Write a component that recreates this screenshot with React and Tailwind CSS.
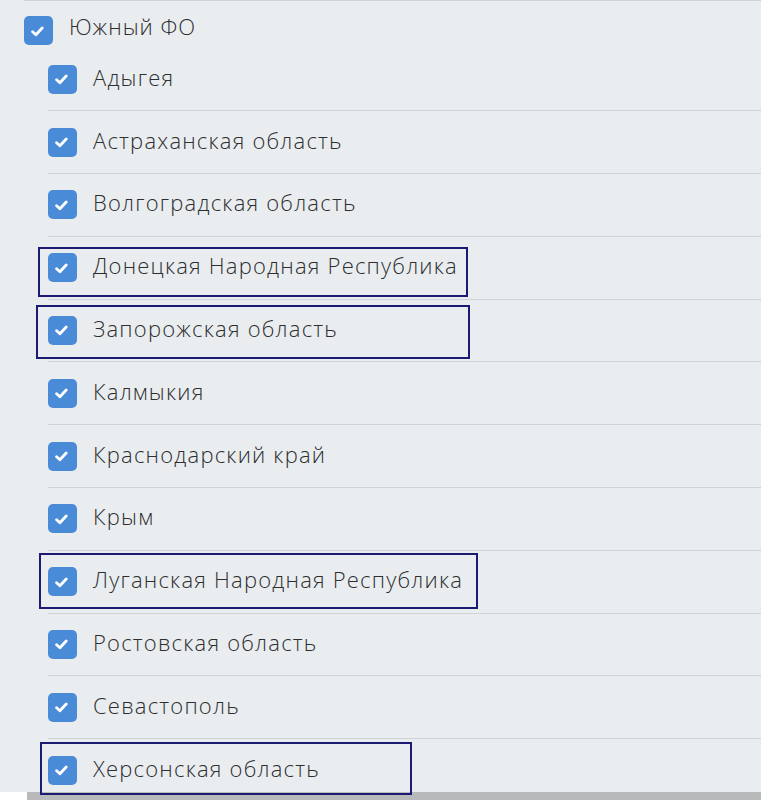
import React from "react";

const items = [
  "Адыгея",
  "Астраханская область",
  "Волгоградская область",
  "Донецкая Народная Республика",
  "Запорожская область",
  "Калмыкия",
  "Краснодарский край",
  "Крым",
  "Луганская Народная Республика",
  "Ростовская область",
  "Севастополь",
  "Херсонская область",
];

function Check() {
  return (
    <span className="flex h-[29px] w-[29px] shrink-0 items-center justify-center rounded-[5px] bg-[#4a8bd8]">
      <svg width="13" height="11" viewBox="0 0 13 11" className="-ml-[3px] mt-[1px]">
        <path d="M1.6 5.8 L4.9 8.8 L11.2 2" fill="none" stroke="#ffffff" strokeWidth="2.8" strokeLinecap="round" strokeLinejoin="round" />
      </svg>
    </span>
  );
}

const boxes = [
  "left-[38px] top-[247px] w-[430px] h-[50px]",
  "left-[36px] top-[305px] w-[434px] h-[54px]",
  "left-[39px] top-[553px] w-[439px] h-[56px]",
  "left-[40px] top-[742px] w-[372px] h-[53px]",
];

export default function App() {
  return (
    <div
      className="relative flex h-[800px] w-[761px] flex-col overflow-hidden bg-[#e9edf0] text-[#2e2e2e]"
      style={{ fontFamily: '"Open Sans", "Noto Sans", sans-serif' }}
    >
      <div className="h-[792px] overflow-hidden">
        <div className="ml-[24px] border-t border-[#cfd4d8]">
          <div className="flex h-[47.4px] items-start pt-[15px]">
            <Check />
            <span className="ml-[16px] mt-[-4px] text-[22px] font-light leading-[29px] tracking-[1px]">Южный ФО</span>
          </div>
          <ul className="ml-[24px]">
            {items.map((t) => (
              <li key={t} className="flex h-[62.8px] items-center border-b border-[#cfd4d8]">
                <Check />
                <span className="ml-[16px] mt-[-4px] text-[22px] font-light leading-[29px] tracking-[1.2px]">{t}</span>
              </li>
            ))}
          </ul>
        </div>
      </div>
      <div className="flex h-[8px]">
        <div className="w-[27px] bg-white" />
        <div className="flex-1 bg-[#b8b9bb]" />
      </div>
      {boxes.map((b) => (
        <div key={b} className={`pointer-events-none absolute border-2 border-[#1b1b72] ${b}`} />
      ))}
    </div>
  );
}
